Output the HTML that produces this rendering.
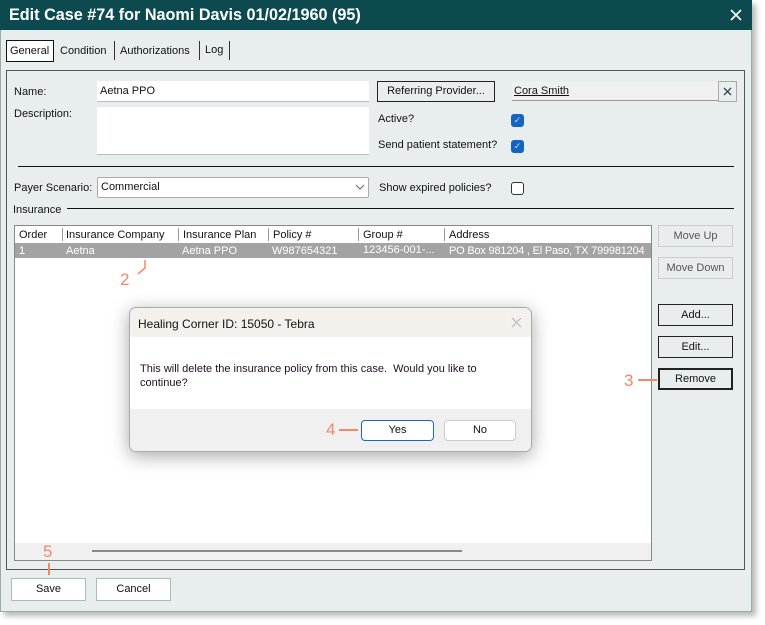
<!DOCTYPE html>
<html><head><style>
*{box-sizing:border-box;margin:0;padding:0}
body{width:765px;height:625px;background:#fff;font-family:"Liberation Sans",sans-serif;font-size:11px;color:#111;position:relative;overflow:hidden}
.a{position:absolute}
.t{position:absolute;white-space:nowrap;font-size:11px}
.btn{position:absolute;border:1px solid #222;background:#e8eeee;text-align:center;font-size:11px;line-height:20px}
.cb{position:absolute;width:13px;height:13px;border-radius:3px;background:#1565c0;color:#cde;font-size:9px;line-height:13px;text-align:center}
.ann{position:absolute;color:#f4876a;font-size:17px}
.hl{position:absolute;background:#f4876a}
</style></head><body>
<div class="a" style="left:4px;top:4px;width:752px;height:612px;background:#888;filter:blur(3px);opacity:.6"></div>
<div class="a" style="left:0;top:0;width:752px;height:612px;background:#e8eeee;border:1px solid #9aa8a8"></div>
<div class="a" style="left:0;top:0;width:752px;height:30px;background:#0d4a50"></div>
<div class="t" style="left:9px;top:6px;color:#fff;font-weight:bold;font-size:16.2px">Edit Case #74 for Naomi Davis 01/02/1960 (95)</div>
<svg class="a" style="left:730px;top:9px" width="12" height="12"><path d="M1 1L11 11M11 1L1 11" stroke="#fff" stroke-width="1.6"/></svg>
<!-- tabs -->
<div class="a" style="left:6px;top:40px;width:48px;height:22px;border:1px solid #111;background:#fff"></div>
<div class="t" style="left:10px;top:45px">General</div>
<div class="t" style="left:60px;top:45px">Condition</div>
<div class="a" style="left:114px;top:41px;width:1px;height:19px;background:#333"></div>
<div class="t" style="left:120px;top:45px">Authorizations</div>
<div class="a" style="left:199px;top:41px;width:1px;height:19px;background:#333"></div>
<div class="t" style="left:205px;top:44px">Log</div>
<div class="a" style="left:229px;top:41px;width:1px;height:19px;background:#333"></div>
<!-- panel -->
<div class="a" style="left:6px;top:70px;width:739px;height:500px;border:1px solid #555"></div>
<div class="t" style="left:14px;top:86px">Name:</div>
<div class="a" style="left:97px;top:81px;width:272px;height:21px;background:#fff;border-bottom:1px solid #bbb"></div>
<div class="t" style="left:100px;top:85px">Aetna PPO</div>
<div class="t" style="left:14px;top:108px">Description:</div>
<div class="a" style="left:97px;top:107px;width:272px;height:48px;background:#fff;border-bottom:1px solid #bbb"></div>
<div class="btn" style="left:377px;top:81px;width:118px;height:21px;line-height:19px">Referring Provider...</div>
<div class="a" style="left:512px;top:82px;width:207px;height:19px;background:#f0f0f0;border-bottom:1px solid #999"></div>
<div class="t" style="left:514px;top:85px;text-decoration:underline">Cora Smith</div>
<div class="a" style="left:718px;top:81px;width:19px;height:21px;border:1px solid #aaa;background:#e8eeee"></div>
<svg class="a" style="left:723px;top:87px" width="9" height="9"><path d="M1 1L8 8M8 1L1 8" stroke="#345" stroke-width="1.3"/></svg>
<div class="t" style="left:378px;top:113px">Active?</div>
<div class="cb" style="left:511px;top:114px">✓</div>
<div class="t" style="left:378px;top:139px">Send patient statement?</div>
<div class="cb" style="left:511px;top:140px">✓</div>
<div class="a" style="left:18px;top:166px;width:716px;height:1px;background:#111"></div>
<div class="t" style="left:14px;top:182px">Payer Scenario:</div>
<div class="a" style="left:97px;top:177px;width:272px;height:21px;background:#fff;border:1px solid #aaa;border-radius:2px"></div>
<div class="t" style="left:101px;top:181px">Commercial</div>
<svg class="a" style="left:355px;top:184px" width="10" height="6"><path d="M1 1L5 5L9 1" stroke="#666" fill="none"/></svg>
<div class="t" style="left:379px;top:182px">Show expired policies?</div>
<div class="a" style="left:511px;top:182px;width:13px;height:13px;border:1px solid #333;border-radius:3px;background:#fff"></div>
<div class="t" style="left:13px;top:204px">Insurance</div>
<div class="a" style="left:67px;top:208px;width:667px;height:1px;background:#111"></div>
<!-- grid -->
<div class="a" style="left:14px;top:225px;width:638px;height:336px;background:#fff;border:1px solid #888;overflow:hidden">
<div class="t" style="left:4px;top:3px">Order</div>
<div class="a" style="left:47px;top:2px;width:1px;height:13px;background:#999"></div>
<div class="t" style="left:51px;top:3px">Insurance Company</div>
<div class="a" style="left:163px;top:2px;width:1px;height:13px;background:#999"></div>
<div class="t" style="left:168px;top:3px">Insurance Plan</div>
<div class="a" style="left:253px;top:2px;width:1px;height:13px;background:#999"></div>
<div class="t" style="left:258px;top:3px">Policy #</div>
<div class="a" style="left:343px;top:2px;width:1px;height:13px;background:#999"></div>
<div class="t" style="left:348px;top:3px">Group #</div>
<div class="a" style="left:429px;top:2px;width:1px;height:13px;background:#999"></div>
<div class="t" style="left:434px;top:3px">Address</div>
<div class="a" style="left:0;top:17px;width:636px;height:15px;background:#a3a3a3"></div>
<div class="t" style="left:4px;top:19px;color:#fff">1</div>
<div class="t" style="left:51px;top:19px;color:#fff">Aetna</div>
<div class="t" style="left:167px;top:19px;color:#fff">Aetna PPO</div>
<div class="t" style="left:257px;top:19px;color:#fff">W987654321</div>
<div class="t" style="left:348px;top:18px;color:#fff">123456-001-...</div>
<div class="t" style="left:434px;top:19px;color:#fff;letter-spacing:-.2px">PO Box 981204 , El Paso, TX 799981204</div>
<div class="a" style="left:0;top:317px;width:636px;height:17px;background:#f0f0f0"></div>
<div class="a" style="left:77px;top:324px;width:370px;height:2px;background:#888"></div>
</div>
<!-- side buttons -->
<div class="btn" style="left:658px;top:225px;width:75px;height:22px;border-color:#ccc;color:#555">Move Up</div>
<div class="btn" style="left:658px;top:257px;width:75px;height:22px;border-color:#ccc;color:#555">Move Down</div>
<div class="btn" style="left:658px;top:304px;width:75px;height:22px">Add...</div>
<div class="btn" style="left:658px;top:336px;width:75px;height:22px">Edit...</div>
<div class="btn" style="left:658px;top:368px;width:75px;height:22px;border-width:2px;line-height:18px">Remove</div>
<!-- bottom -->
<div class="btn" style="left:11px;top:578px;width:75px;height:23px;background:#fff;border-color:#abb">Save</div>
<div class="btn" style="left:96px;top:578px;width:75px;height:23px;background:#fff;border-color:#abb">Cancel</div>
<!-- dialog -->
<div class="a" style="left:129px;top:307px;width:403px;height:145px;border-radius:7px;box-shadow:0 4px 18px rgba(0,0,0,.35);border:1px solid #aaa;overflow:hidden;background:#fff">
<div class="a" style="left:0;top:0;width:403px;height:29px;background:#f4f0ec"></div>
<div class="t" style="left:8px;top:9px;font-size:12px">Healing Corner ID: 15050 - Tebra</div>
<svg class="a" style="left:381px;top:9px" width="11" height="11"><path d="M1 1L10 10M10 1L1 10" stroke="#bbb" stroke-width="1.2"/></svg>
<div class="t" style="left:10px;top:54px;line-height:14px;color:#201020">This will delete the insurance policy from this case.&nbsp; Would you like to<br>continue?</div>
<div class="a" style="left:0;top:101px;width:403px;height:44px;background:#f0f0f0"></div>
<div class="a" style="left:231px;top:112px;width:73px;height:21px;border:1px solid #1a68c0;border-radius:4px;background:#fff;text-align:center;line-height:19px">Yes</div>
<div class="a" style="left:314px;top:112px;width:72px;height:21px;border:1px solid #ccc;border-radius:4px;background:#fff;text-align:center;line-height:19px">No</div>
</div>
<!-- annotations -->
<div class="ann" style="left:120px;top:270px">2</div>
<svg class="a" style="left:130px;top:258px" width="20" height="20"><path d="M15 2 V10 L8 16" stroke="#f4876a" stroke-width="1.5" fill="none"/></svg>
<div class="ann" style="left:624px;top:371px">3</div>
<div class="hl" style="left:638px;top:379px;width:19px;height:1.5px"></div>
<div class="ann" style="left:326px;top:420px">4</div>
<div class="hl" style="left:339px;top:429px;width:19px;height:1.5px"></div>
<div class="ann" style="left:43px;top:542px">5</div>
<div class="hl" style="left:48px;top:563px;width:1.5px;height:12px"></div>
</body></html>
